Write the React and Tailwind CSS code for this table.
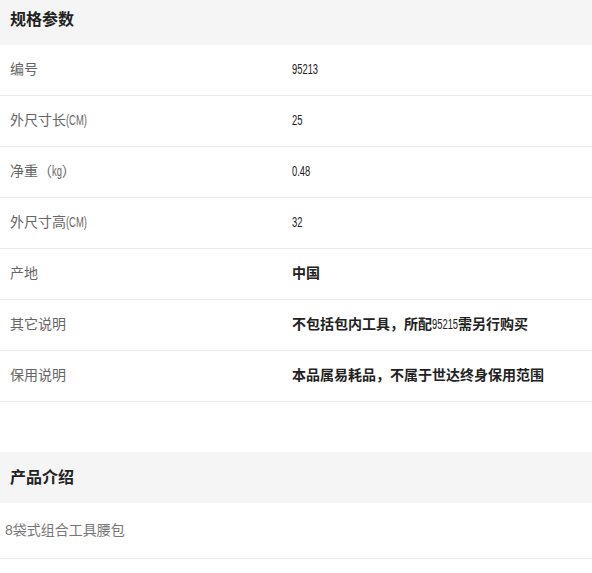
import React from 'react';

// condensed digits/latin: Liberation Sans squeezed, with margin to give back the space
function Narrow({ children, w }) {
  return (
    <span
      className="inline-block origin-left scale-x-[0.67] font-normal"
      style={{ marginRight: -w }}
    >
      {children}
    </span>
  );
}

const SPECS = [
  { label: '编号', value: <Narrow w={13}>95213</Narrow>, num: true },
  { label: <>外尺寸长<Narrow w={10}>(CM)</Narrow></>, value: <Narrow w={5}>25</Narrow>, num: true },
  { label: <>净重（<Narrow w={5}>kg</Narrow>）</>, value: <Narrow w={9}>0.48</Narrow>, num: true },
  { label: <>外尺寸高<Narrow w={10}>(CM)</Narrow></>, value: <Narrow w={5}>32</Narrow>, num: true },
  { label: '产地', value: '中国' },
  { label: '其它说明', value: <>不包括包内工具，所配<Narrow w={13}>95215</Narrow>需另行购买</> },
  { label: '保用说明', value: '本品属易耗品，不属于世达终身保用范围' },
];

const font = { fontFamily: '"Liberation Sans", "Noto Sans CJK SC", sans-serif' };

export default function App() {
  return (
    <div className="w-[592px] bg-white" style={font}>
      {/* 规格参数 */}
      <div className="h-[45px] bg-[#f5f5f5] flex items-center px-[10px] pb-[6px]">
        <h2 className="text-[16px] font-bold text-[#222]">规格参数</h2>
      </div>
      {SPECS.map((s, i) => (
        <div key={i} className="flex items-center h-[51px] border-b border-[#ebebeb] pb-[2px]">
          <div className="w-[292px] pl-[10px] text-[14px] text-[#666] whitespace-nowrap">{s.label}</div>
          <div className={s.num ? 'text-[14px] text-[#222]' : 'text-[14px] font-bold text-[#222]'}>
            {s.value}
          </div>
        </div>
      ))}

      <div className="h-[50px]" />

      {/* 产品介绍 */}
      <div className="h-[51px] bg-[#f5f5f5] flex items-center px-[10px]">
        <h2 className="text-[16px] font-bold text-[#222]">产品介绍</h2>
      </div>
      <div className="flex items-center h-[56px] border-b border-[#ebebeb] pl-[5px] text-[14px] text-[#777]">
        8袋式组合工具腰包
      </div>
    </div>
  );
}
